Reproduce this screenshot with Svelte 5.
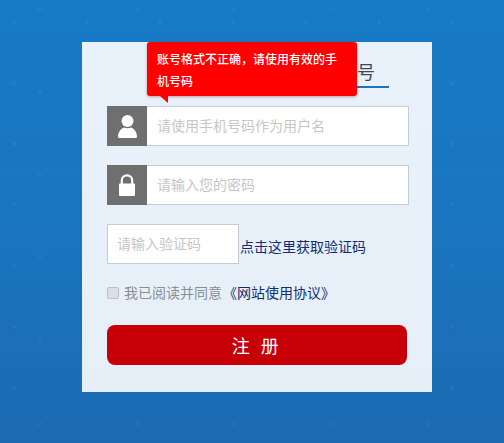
<script>
  const stack = '"Noto Sans CJK SC", "Liberation Sans", sans-serif';
</script>

<div class="page" style:font-family={stack}>
  <form class="card" onsubmit={(e) => e.preventDefault()}>
    <div class="tabs">
      <span class="tab">注册账号</span>
    </div>

    <div class="tip">
      账号格式不正确，请使用有效的手机号码
    </div>

    <div class="field">
      <span class="icon">
        <svg width="19" height="23" viewBox="0 0 19 23">
          <circle cx="9.500" cy="6" r="6" fill="#fff" />
          <path d="M1.200 23C.4 23 0 22.500 0 21.800c0-4.600 2.600-8 6.200-9.300 2.100 1 4.500 1 6.600 0 3.600 1.300 6.200 4.700 6.200 9.300 0 .7-.4 1.200-1.200 1.200z" fill="#fff" />
        </svg>
      </span>
      <input placeholder="请使用手机号码作为用户名" />
    </div>

    <div class="field">
      <span class="icon">
        <svg width="16" height="22" viewBox="0 0 16 22">
          <path d="M2.800 11V6.500a5.200 5.200 0 0 1 10.400 0V11" fill="none" stroke="#fff" stroke-width="2.200" />
          <rect x="0" y="9.500" width="16" height="12.500" rx="1" fill="#fff" />
        </svg>
      </span>
      <input placeholder="请输入您的密码" />
    </div>

    <div class="captcha">
      <input class="code" placeholder="请输入验证码" />
      <a href="#code" class="link">点击这里获取验证码</a>
    </div>

    <label class="agree">
      <input type="checkbox" disabled />
      <span>我已阅读并同意</span>
      <a href="#terms">《网站使用协议》</a>
    </label>

    <button type="submit">注 册</button>
  </form>
</div>

<style>
  :global(body) {
    margin: 0;
  }
  .page {
    width: 504px;
    height: 443px;
    box-sizing: border-box;
    padding: 42px 0 0 82px;
    overflow: hidden;
    background:
      radial-gradient(circle at 14px 22px, rgba(120, 180, 235, 0.16) 0, transparent 2.500px) 0 0 / 73px 61px,
      radial-gradient(circle at 40px 9px, rgba(120, 180, 235, 0.12) 0, transparent 3px) 0 0 / 97px 83px,
      linear-gradient(180deg, #177bc6 0%, #1a75bf 50%, #1b6bb2 100%);
  }
  .card {
    position: relative;
    width: 350px;
    height: 350px;
    box-sizing: border-box;
    padding: 0 23px 0 25px;
    background: linear-gradient(180deg, #e9f1fb 0%, #e6eef7 100%);
  }
  .tabs {
    display: flex;
    justify-content: flex-end;
    height: 64px;
    margin-right: 20px;
    box-sizing: border-box;
  }
  .tab {
    height: 46px;
    padding: 15px 14px 0 14px;
    box-sizing: border-box;
    font-size: 18px;
    line-height: 28px;
    color: #3b4a5a;
    border-bottom: 2px solid #1a75bf;
  }
  .tip {
    position: absolute;
    left: 65px;
    top: 0;
    width: 210px;
    height: 54px;
    box-sizing: border-box;
    padding: 6px 10px;
    font-size: 12px;
    font-weight: 500;
    line-height: 22px;
    color: #fff;
    background: #ff0000;
    border-radius: 3px;
    box-shadow: 0 1px 3px rgba(120, 0, 0, 0.35);
  }
  .tip::after {
    content: "";
    position: absolute;
    left: 13px;
    top: 54px;
    border-style: solid;
    border-width: 7px 8px 0 0;
    border-color: #ff0000 transparent transparent transparent;
    transform: scaleX(-1);
  }
  .field {
    display: flex;
    width: 302px;
    height: 40px;
    margin-bottom: 19px;
  }
  .icon {
    display: flex;
    flex: none;
    width: 40px;
    align-items: center;
    justify-content: center;
    background: #706f6f;
  }
  input {
    font-family: inherit;
    color: #333;
    outline: none;
  }
  input::placeholder {
    color: #c6c6c6;
    opacity: 1;
  }
  .field input {
    flex: 1;
    min-width: 0;
    box-sizing: border-box;
    padding: 0 10px 2px;
    font-size: 14px;
    background: #fff;
    border: 1px solid #c6ccd6;
    border-left: none;
  }
  .captcha {
    display: flex;
    align-items: center;
    height: 40px;
    margin-bottom: 19px;
  }
  .code {
    flex: none;
    width: 132px;
    height: 40px;
    box-sizing: border-box;
    padding: 0 9px 2px;
    font-size: 14px;
    background: #fff;
    border: 1px solid #c6ccd6;
  }
  .link {
    margin: 3px 0 0 1px;
    font-size: 14px;
    color: #0f2f75;
    text-decoration: none;
  }
  .agree {
    display: flex;
    align-items: center;
    height: 20px;
    margin-top: -1px;
    font-size: 14px;
    color: #8a8f96;
  }
  .agree input {
    appearance: none;
    flex: none;
    width: 12px;
    height: 12px;
    margin: 1px 5px 0 0;
    box-sizing: border-box;
    background: #dcdfe4;
    border: 1px solid #bcbfc4;
    border-radius: 2px;
  }
  .agree a {
    margin-left: 1px;
    color: #0f2f75;
    text-decoration: none;
  }
  button {
    display: block;
    width: 300px;
    height: 40px;
    margin-top: 23px;
    padding: 0;
    font-family: inherit;
    font-size: 18px;
    letter-spacing: 3.500px;
    color: #fff;
    background: #c70008;
    border: none;
    border-radius: 8px;
  }
</style>
